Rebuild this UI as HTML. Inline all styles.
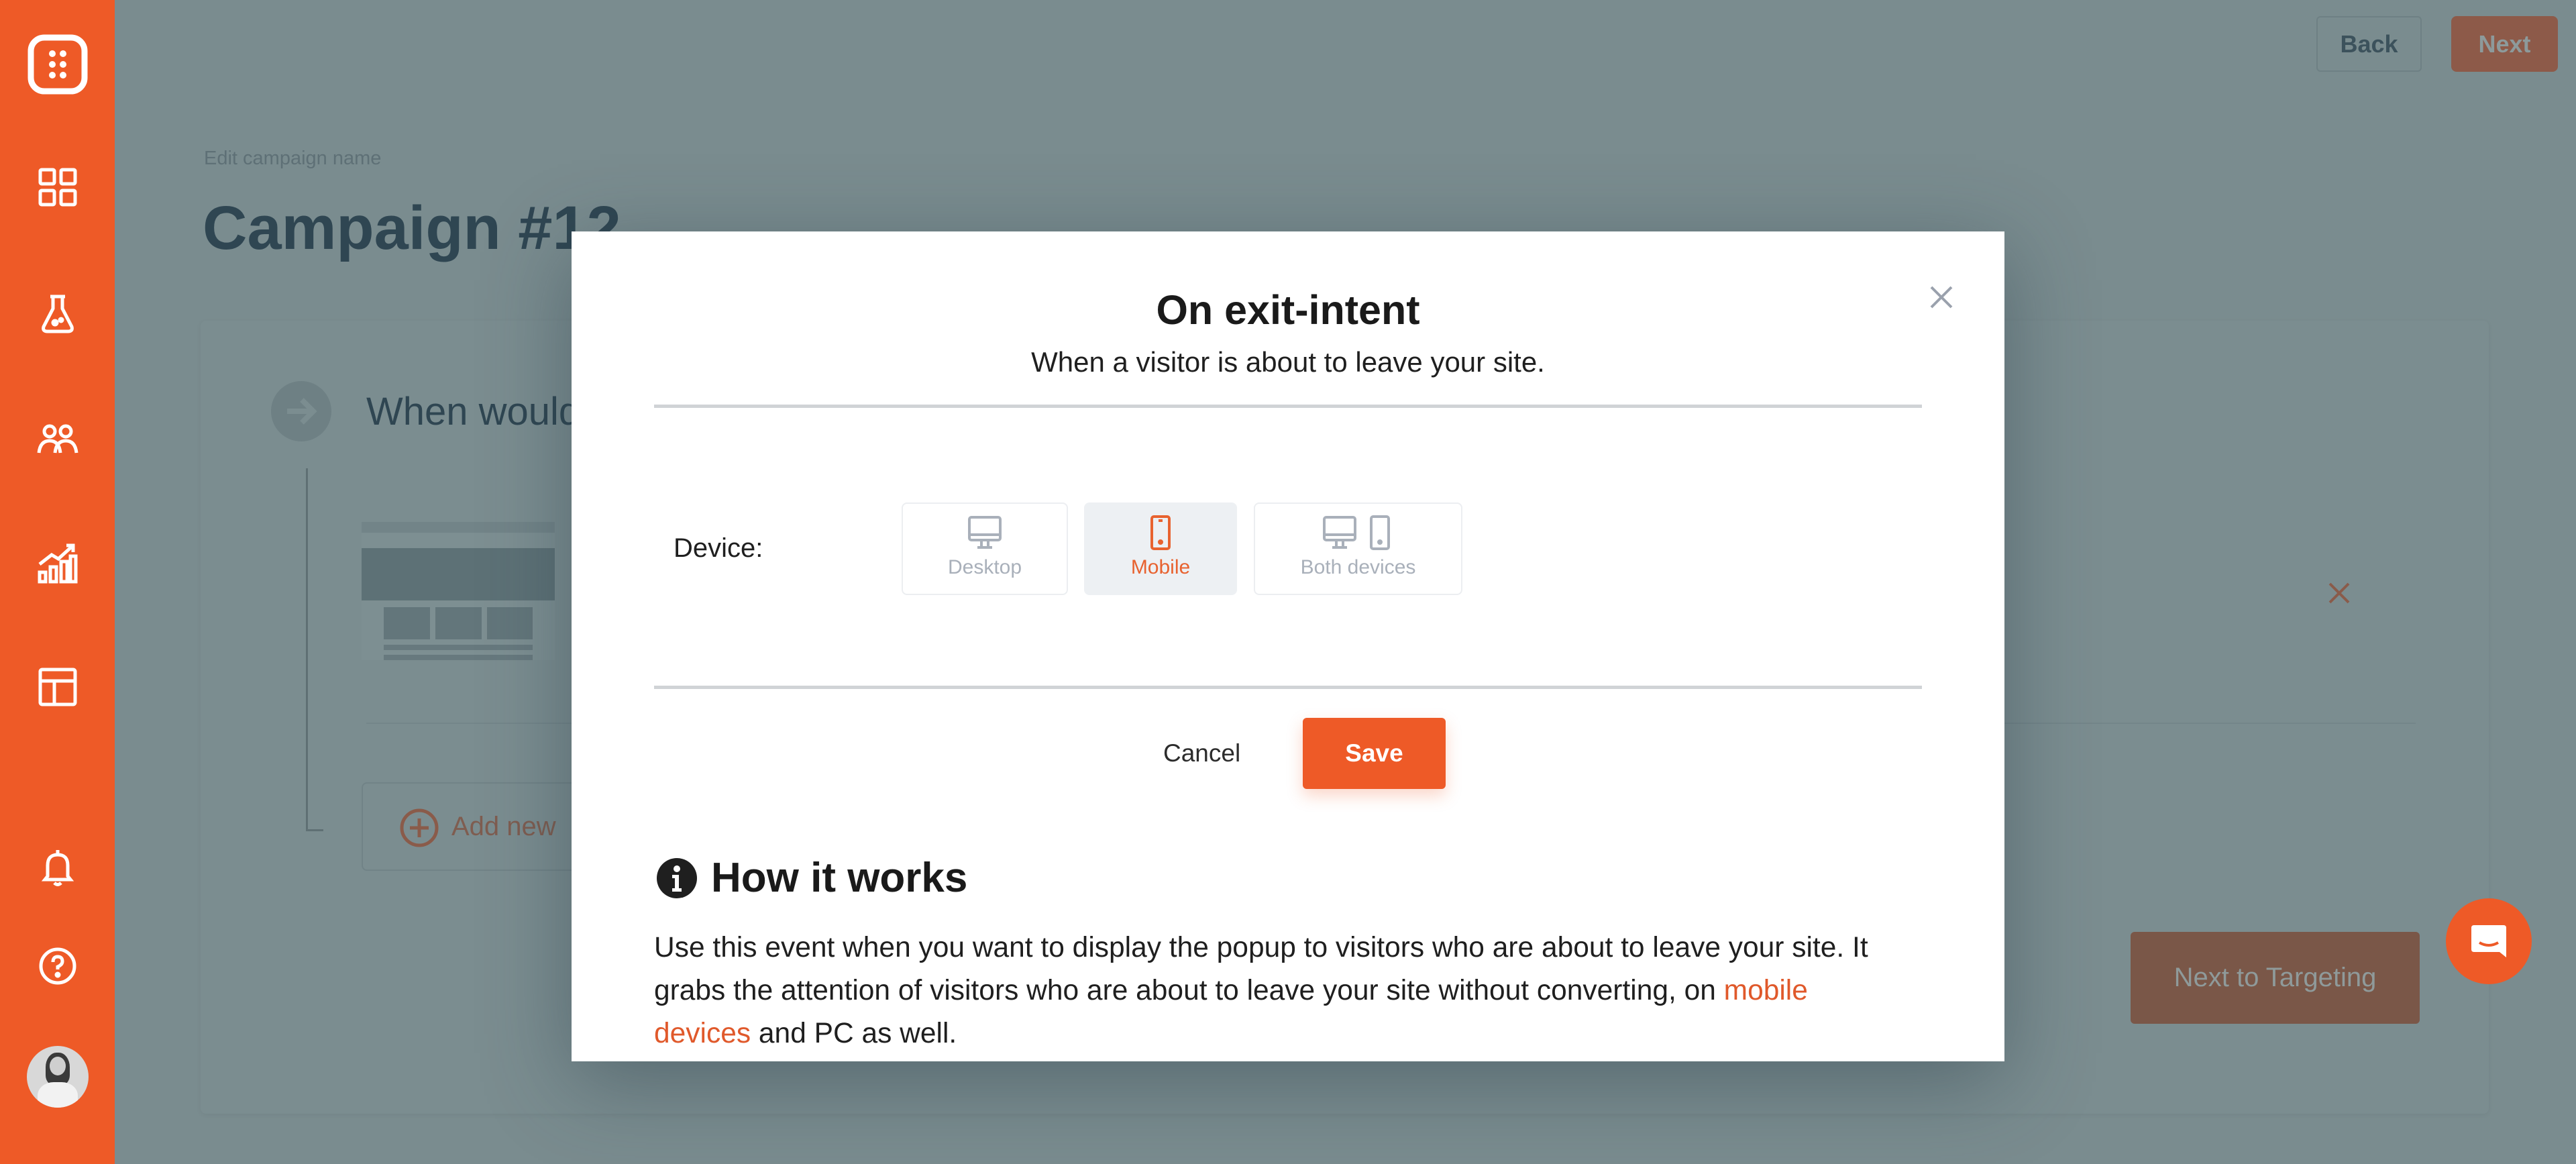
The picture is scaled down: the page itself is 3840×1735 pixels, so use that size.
<!DOCTYPE html>
<html><head><meta charset="utf-8"><style>
*{margin:0;padding:0;box-sizing:border-box}
body{width:3840px;height:1735px;overflow:hidden;background:#7a8c8f;font-family:"Liberation Sans",sans-serif;position:relative}
.abs{position:absolute}
.side{left:0;top:0;width:171px;height:1735px;background:#ee5a27}
.ic{position:absolute;left:55px;width:62px;height:62px}
.mt{color:#2f4652}
.modal{left:852px;top:345px;width:2136px;height:1237px;background:#fff;box-shadow:0 30px 120px rgba(40,60,70,.45)}
.hr{position:absolute;left:123px;width:1890px;height:5px;background:#d0d3d6}
.card{position:absolute;top:404px;height:138px;border:2px solid #eceef1;border-radius:8px;text-align:center;font-size:30px;color:#a9b0ba}
</style></head><body>
<div class="abs side">
 <svg class="abs" style="left:40px;top:50px" width="92" height="92" viewBox="0 0 92 92"><rect x="6" y="6" width="80" height="80" rx="20" fill="none" stroke="#fff" stroke-width="9"/><g fill="#fff"><circle cx="38" cy="30" r="5"/><circle cx="54" cy="30" r="5"/><circle cx="38" cy="46" r="5"/><circle cx="54" cy="46" r="5"/><circle cx="38" cy="62" r="5"/><circle cx="54" cy="62" r="5"/></g></svg>
 <svg class="ic" style="top:248px" viewBox="0 0 62 62" fill="none" stroke="#fff" stroke-width="5"><rect x="5" y="5" width="21" height="21" rx="2"/><rect x="36" y="5" width="21" height="21" rx="2"/><rect x="5" y="36" width="21" height="21" rx="2"/><rect x="36" y="36" width="21" height="21" rx="2"/></svg>
 <svg class="ic" style="top:437px" viewBox="0 0 62 62" fill="none" stroke="#fff" stroke-width="5" stroke-linejoin="round"><path d="M20 5h22M24 5v18L10 50q-2 7 6 7h30q8 0 6-7L38 23V5"/><circle cx="27" cy="44" r="3" fill="#fff"/><circle cx="36" cy="40" r="2" fill="#fff"/></svg>
 <svg class="ic" style="top:623px" viewBox="0 0 62 62" fill="none" stroke="#fff" stroke-width="5"><circle cx="19" cy="20" r="8"/><circle cx="43" cy="20" r="8"/><path d="M3 52q2-18 16-18t16 18M27 52q2-18 16-18t16 18"/></svg>
 <svg class="ic" style="top:809px" viewBox="0 0 62 62" fill="none" stroke="#fff" stroke-width="5"><rect x="4" y="44" width="9" height="14"/><rect x="20" y="36" width="9" height="22"/><rect x="36" y="28" width="9" height="30"/><rect x="50" y="20" width="8" height="38"/><path d="M4 32L22 18l10 6L54 4M44 4h10v10"/></svg>
 <svg class="ic" style="top:993px" viewBox="0 0 62 62" fill="none" stroke="#fff" stroke-width="5"><rect x="5" y="5" width="52" height="52" rx="3"/><path d="M5 22h52M26 22v35"/></svg>
 <svg class="ic" style="top:1262px" viewBox="0 0 62 62" fill="none" stroke="#fff" stroke-width="5"><path d="M31 5v5M16 44V28q0-16 15-16t15 16v16l4 5H12z"/><path d="M26 54q5 5 10 0"/></svg>
 <svg class="ic" style="top:1409px" viewBox="0 0 62 62" fill="none" stroke="#fff" stroke-width="5"><circle cx="31" cy="31" r="25"/><path d="M24 25q0-8 7-8t7 7q0 5-7 8v4"/><circle cx="31" cy="44" r="2" fill="#fff"/></svg>
 <div class="abs" style="left:40px;top:1559px;width:92px;height:92px;border-radius:50%;background:#d8d8d8;overflow:hidden">
  <div class="abs" style="left:28px;top:10px;width:36px;height:48px;border-radius:45% 45% 30% 30%;background:#3a3a3a"></div>
  <div class="abs" style="left:34px;top:16px;width:24px;height:28px;border-radius:50%;background:#cfcfcf"></div>
  <div class="abs" style="left:16px;top:54px;width:60px;height:50px;border-radius:40% 40% 0 0;background:#f2f2f2"></div>
 </div>
</div>
<div class="abs" style="left:3453px;top:24px;width:157px;height:83px;border:2px solid #6e8084;border-radius:6px;font-size:36px;font-weight:bold;color:#3c525c;text-align:center;line-height:79px">Back</div>
<div class="abs" style="left:3654px;top:24px;width:159px;height:83px;background:#8d5a49;border-radius:8px;font-size:36px;font-weight:bold;color:#8d9a9b;text-align:center;line-height:83px">Next</div>
<div class="abs" style="left:304px;top:220px;font-size:29px;color:#5e7076">Edit campaign name</div>
<div class="abs mt" style="left:302px;top:288px;font-size:92px;font-weight:bold">Campaign #12</div>
<div class="abs" style="left:299px;top:478px;width:3411px;height:1182px;background:#7b8d90;border-radius:8px;box-shadow:0 2px 8px rgba(0,0,0,.05)"></div>
<div class="abs" style="left:404px;top:568px;width:90px;height:90px;border-radius:50%;background:#6e8084"></div>
<svg class="abs" style="left:420px;top:584px" width="58" height="58" viewBox="0 0 58 58" fill="none" stroke="#7b8d90" stroke-width="8"><path d="M8 29h40M30 12l17 17-17 17"/></svg>
<div class="abs mt" style="left:546px;top:580px;font-size:58px">When would</div>
<div class="abs" style="left:456px;top:698px;width:3px;height:540px;background:#5f7074"></div>
<div class="abs" style="left:456px;top:1236px;width:26px;height:3px;background:#5f7074"></div>
<div class="abs" style="left:539px;top:778px;width:288px;height:206px;background:#7d8f92">
 <div class="abs" style="left:0;top:0;width:288px;height:16px;background:#728488"></div>
 <div class="abs" style="left:0;top:39px;width:288px;height:78px;background:#5d7176"></div>
 <div class="abs" style="left:33px;top:127px;width:69px;height:48px;background:#63767b"></div>
 <div class="abs" style="left:110px;top:127px;width:69px;height:48px;background:#63767b"></div>
 <div class="abs" style="left:187px;top:127px;width:68px;height:48px;background:#63767b"></div>
 <div class="abs" style="left:33px;top:183px;width:222px;height:8px;background:#67797e"></div>
 <div class="abs" style="left:33px;top:198px;width:222px;height:8px;background:#67797e"></div>
</div>
<div class="abs" style="left:546px;top:1077px;width:3055px;height:2px;background:#74868a"></div>
<svg class="abs" style="left:3467px;top:864px" width="40" height="40" viewBox="0 0 40 40" stroke="#8a5b4a" stroke-width="4"><path d="M6 6l28 28M34 6L6 34"/></svg>
<div class="abs" style="left:539px;top:1166px;width:600px;height:132px;border:2px solid #718387;border-radius:8px"></div>
<svg class="abs" style="left:595px;top:1204px" width="60" height="60" viewBox="0 0 60 60" fill="none" stroke="#8a5b4a" stroke-width="5"><circle cx="30" cy="30" r="26"/><path d="M30 16v28M16 30h28"/></svg>
<div class="abs" style="left:673px;top:1210px;font-size:40px;color:#7f5d50">Add new</div>
<div class="abs" style="left:3176px;top:1389px;width:431px;height:137px;background:#7a5748;border-radius:6px;font-size:40px;color:#8f9a9a;text-align:center;line-height:137px">Next to Targeting</div>
<div class="abs" style="left:3646px;top:1339px;width:128px;height:128px;border-radius:50%;background:#ee5a27"></div>
<svg class="abs" style="left:3682px;top:1375px" width="56" height="56" viewBox="0 0 56 56"><path d="M6 4h44q4 0 4 4v44l-10-8H6q-4 0-4-4V8q0-4 4-4z" fill="#fff"/><path d="M14 30q14 8 28 0" stroke="#ee5a27" stroke-width="4" fill="none"/></svg>

<div class="abs modal">
 <div class="abs" style="left:0;top:82px;width:2136px;text-align:center;font-size:61px;font-weight:bold;color:#1a1a1a">On exit-intent</div>
 <div class="abs" style="left:0;top:171px;width:2136px;text-align:center;font-size:42px;color:#1f1f1f">When a visitor is about to leave your site.</div>
 <svg class="abs" style="left:2022px;top:78px" width="40" height="40" viewBox="0 0 40 40" stroke="#9aa1ad" stroke-width="4"><path d="M5 5l30 30M35 5L5 35"/></svg>
 <div class="hr" style="top:258px"></div>
 <div class="abs" style="left:152px;top:450px;font-size:40px;color:#1f1f1f">Device:</div>
 <div class="card" style="left:492px;width:248px">
  <svg style="margin-top:16px" width="54" height="54" viewBox="0 0 54 54" fill="none" stroke="#a9b0ba" stroke-width="4"><rect x="4" y="4" width="46" height="34" rx="3"/><path d="M4 30h46M22 38v10M32 38v10M16 49h22"/></svg>
  <div style="margin-top:0">Desktop</div></div>
 <div class="card" style="left:764px;width:228px;background:#edf0f3;border-color:#edf0f3;color:#e8622f">
  <svg style="margin-top:16px" width="54" height="54" viewBox="0 0 54 54" fill="none" stroke="#e8622f" stroke-width="4"><rect x="14" y="3" width="26" height="48" rx="3"/><circle cx="27" cy="41" r="2" fill="#e8622f"/><path d="M24 9h6"/></svg>
  <div style="margin-top:0">Mobile</div></div>
 <div class="card" style="left:1017px;width:311px">
  <svg style="margin-top:16px" width="130" height="54" viewBox="0 0 130 54" fill="none" stroke="#a9b0ba" stroke-width="4"><rect x="14" y="4" width="46" height="34" rx="3"/><path d="M14 30h46M32 38v10M42 38v10M26 49h22"/><rect x="84" y="3" width="26" height="48" rx="3"/><circle cx="97" cy="41" r="2" fill="#a9b0ba"/></svg>
  <div style="margin-top:0">Both devices</div></div>
 <div class="hr" style="top:677px"></div>
 <div class="abs" style="left:882px;top:757px;font-size:37px;color:#2c2c2c">Cancel</div>
 <div class="abs" style="left:1090px;top:725px;width:213px;height:106px;background:#ee5a27;border-radius:6px;color:#fff;font-size:37px;font-weight:bold;text-align:center;line-height:106px;box-shadow:0 10px 24px rgba(238,90,39,.25)">Save</div>
 <svg class="abs" style="left:125px;top:932px" width="64" height="64" viewBox="0 0 64 64"><circle cx="32" cy="32" r="30" fill="#1f1f1f"/><circle cx="32" cy="18" r="5" fill="#fff"/><path d="M25 27h10v20h4v5H25v-5h4V32h-4z" fill="#fff"/></svg>
 <div class="abs" style="left:208px;top:928px;font-size:62px;font-weight:bold;color:#1a1a1a">How it works</div>
 <div class="abs" style="left:123px;top:1036px;width:1960px;font-size:42.5px;line-height:64px;color:#1f1f1f;white-space:nowrap">Use this event when you want to display the popup to visitors who are about to leave your site. It<br>grabs the attention of visitors who are about to leave your site without converting, on <span style="color:#e0592b">mobile</span><br><span style="color:#e0592b">devices</span> and PC as well.</div>
</div>
</body></html>
